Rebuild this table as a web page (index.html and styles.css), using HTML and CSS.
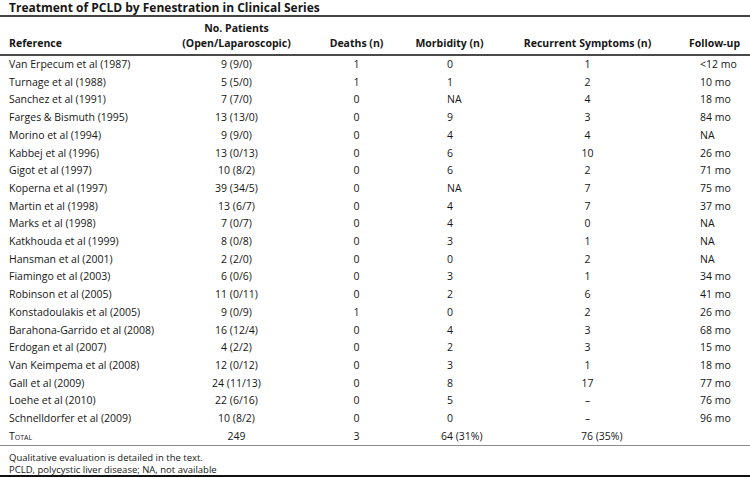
FILE: index.html
```html
<!DOCTYPE html>
<html lang="en">
<head>
<meta charset="utf-8">
<title>Treatment of PCLD by Fenestration in Clinical Series</title>
<link rel="stylesheet" href="styles.css">
</head>
<body>
<div class="sheet">
  <h1 class="title">Treatment of PCLD by Fenestration in Clinical Series</h1>
  <table class="data">
    <colgroup>
      <col class="c-ref"><col class="c-pat"><col class="c-dth"><col class="c-mor"><col class="c-rec"><col class="c-fol">
    </colgroup>
    <thead>
      <tr>
        <th class="ref">Reference</th>
        <th>No. Patients<br>(Open/Laparoscopic)</th>
        <th>Deaths (n)</th>
        <th>Morbidity (n)</th>
        <th>Recurrent Symptoms (n)</th>
        <th>Follow-up</th>
      </tr>
    </thead>
    <tbody>
      <tr><td class="ref">Van Erpecum et al (1987)</td><td>9 (9/0)</td><td>1</td><td class="mor">0</td><td>1</td><td class="fol">&lt;12 mo</td></tr>
      <tr><td class="ref">Turnage et al (1988)</td><td>5 (5/0)</td><td>1</td><td class="mor">1</td><td>2</td><td class="fol">10 mo</td></tr>
      <tr><td class="ref">Sanchez et al (1991)</td><td>7 (7/0)</td><td>0</td><td class="mor">NA</td><td>4</td><td class="fol">18 mo</td></tr>
      <tr><td class="ref">Farges &amp; Bismuth (1995)</td><td>13 (13/0)</td><td>0</td><td class="mor">9</td><td>3</td><td class="fol">84 mo</td></tr>
      <tr><td class="ref">Morino et al (1994)</td><td>9 (9/0)</td><td>0</td><td class="mor">4</td><td>4</td><td class="fol">NA</td></tr>
      <tr><td class="ref">Kabbej et al (1996)</td><td>13 (0/13)</td><td>0</td><td class="mor">6</td><td>10</td><td class="fol">26 mo</td></tr>
      <tr><td class="ref">Gigot et al (1997)</td><td>10 (8/2)</td><td>0</td><td class="mor">6</td><td>2</td><td class="fol">71 mo</td></tr>
      <tr><td class="ref">Koperna et al (1997)</td><td>39 (34/5)</td><td>0</td><td class="mor">NA</td><td>7</td><td class="fol">75 mo</td></tr>
      <tr><td class="ref">Martin et al (1998)</td><td>13 (6/7)</td><td>0</td><td class="mor">4</td><td>7</td><td class="fol">37 mo</td></tr>
      <tr><td class="ref">Marks et al (1998)</td><td>7 (0/7)</td><td>0</td><td class="mor">4</td><td>0</td><td class="fol">NA</td></tr>
      <tr><td class="ref">Katkhouda et al (1999)</td><td>8 (0/8)</td><td>0</td><td class="mor">3</td><td>1</td><td class="fol">NA</td></tr>
      <tr><td class="ref">Hansman et al (2001)</td><td>2 (2/0)</td><td>0</td><td class="mor">0</td><td>2</td><td class="fol">NA</td></tr>
      <tr><td class="ref">Fiamingo et al (2003)</td><td>6 (0/6)</td><td>0</td><td class="mor">3</td><td>1</td><td class="fol">34 mo</td></tr>
      <tr><td class="ref">Robinson et al (2005)</td><td>11 (0/11)</td><td>0</td><td class="mor">2</td><td>6</td><td class="fol">41 mo</td></tr>
      <tr><td class="ref">Konstadoulakis et al (2005)</td><td>9 (0/9)</td><td>1</td><td class="mor">0</td><td>2</td><td class="fol">26 mo</td></tr>
      <tr><td class="ref">Barahona-Garrido et al (2008)</td><td>16 (12/4)</td><td>0</td><td class="mor">4</td><td>3</td><td class="fol">68 mo</td></tr>
      <tr><td class="ref">Erdogan et al (2007)</td><td>4 (2/2)</td><td>0</td><td class="mor">2</td><td>3</td><td class="fol">15 mo</td></tr>
      <tr><td class="ref">Van Keimpema et al (2008)</td><td>12 (0/12)</td><td>0</td><td class="mor">3</td><td>1</td><td class="fol">18 mo</td></tr>
      <tr><td class="ref">Gall et al (2009)</td><td>24 (11/13)</td><td>0</td><td class="mor">8</td><td>17</td><td class="fol">77 mo</td></tr>
      <tr><td class="ref">Loehe et al (2010)</td><td>22 (6/16)</td><td>0</td><td class="mor">5</td><td>–</td><td class="fol">76 mo</td></tr>
      <tr><td class="ref">Schnelldorfer et al (2009)</td><td>10 (8/2)</td><td>0</td><td class="mor">0</td><td>–</td><td class="fol">96 mo</td></tr>
      <tr class="total"><td class="ref sc">Total</td><td>249</td><td>3</td><td class="mor">64 (31%)</td><td class="rec-total">76 (35%)</td><td class="fol"></td></tr>
    </tbody>
  </table>
  <div class="notes">
    <p>Qualitative evaluation is detailed in the text.</p>
    <p>PCLD, polycystic liver disease; NA, not available</p>
  </div>
</div>
</body>
</html>
```
FILE: styles.css
```css
html, body {
  margin: 0;
  padding: 0;
  background: #fff;
}
body {
  font-family: "Open Sans", "Noto Sans", sans-serif;
  color: #161616;
  font-size: 10.5px;
  width: 750px;
  height: 477px;
  overflow: hidden;
}
.sheet {
  box-sizing: border-box;
  height: 477px;
  display: flex;
  flex-direction: column;
  border-bottom: 2px solid #111;
}
.title {
  flex: none;
  margin: 0;
  padding: 0 0 0 9px;
  height: 15px;
  line-height: 15px;
  font-size: 12px;
  font-weight: 700;
  border-bottom: 2px solid #444;
}
.data {
  flex: none;
  border-collapse: collapse;
  table-layout: fixed;
  width: 750px;
}
.c-ref { width: 163px; }
.c-pat { width: 147px; }
.c-dth { width: 93px; }
.c-mor { width: 93px; }
.c-rec { width: 183px; }
.c-fol { width: 71px; }
.data th {
  font-weight: 700;
  text-align: center;
  vertical-align: bottom;
  line-height: 15px;
  padding: 4px 0 3px;
  height: 30px;
  border-bottom: 2px solid #4a4a4a;
}
.data th.ref, .data td.ref {
  text-align: left;
  padding-left: 9px;
}
.data td {
  text-align: center;
  height: 17.7px;
  line-height: 17.7px;
  padding: 0;
  white-space: nowrap;
}
.data td.mor {
  text-align: left;
  padding-left: 44px;
}
.data td.fol {
  text-align: left;
  padding-left: 21px;
}
.data tr.total td {
  border-bottom: 1px solid #8a8a8a;
}
.data tr.total td.mor {
  padding-left: 38px;
}
.data td.rec-total {
  text-align: left;
  padding-left: 85px;
}
.sc {
  font-variant: small-caps;
  text-transform: lowercase;
}
.sc::first-letter {
  text-transform: uppercase;
}
.notes {
  flex: 1;
  min-height: 0;
  padding: 6px 0 0 9px;
  font-size: 9.5px;
  line-height: 12px;
}
.notes p {
  margin: 0;
}
```
